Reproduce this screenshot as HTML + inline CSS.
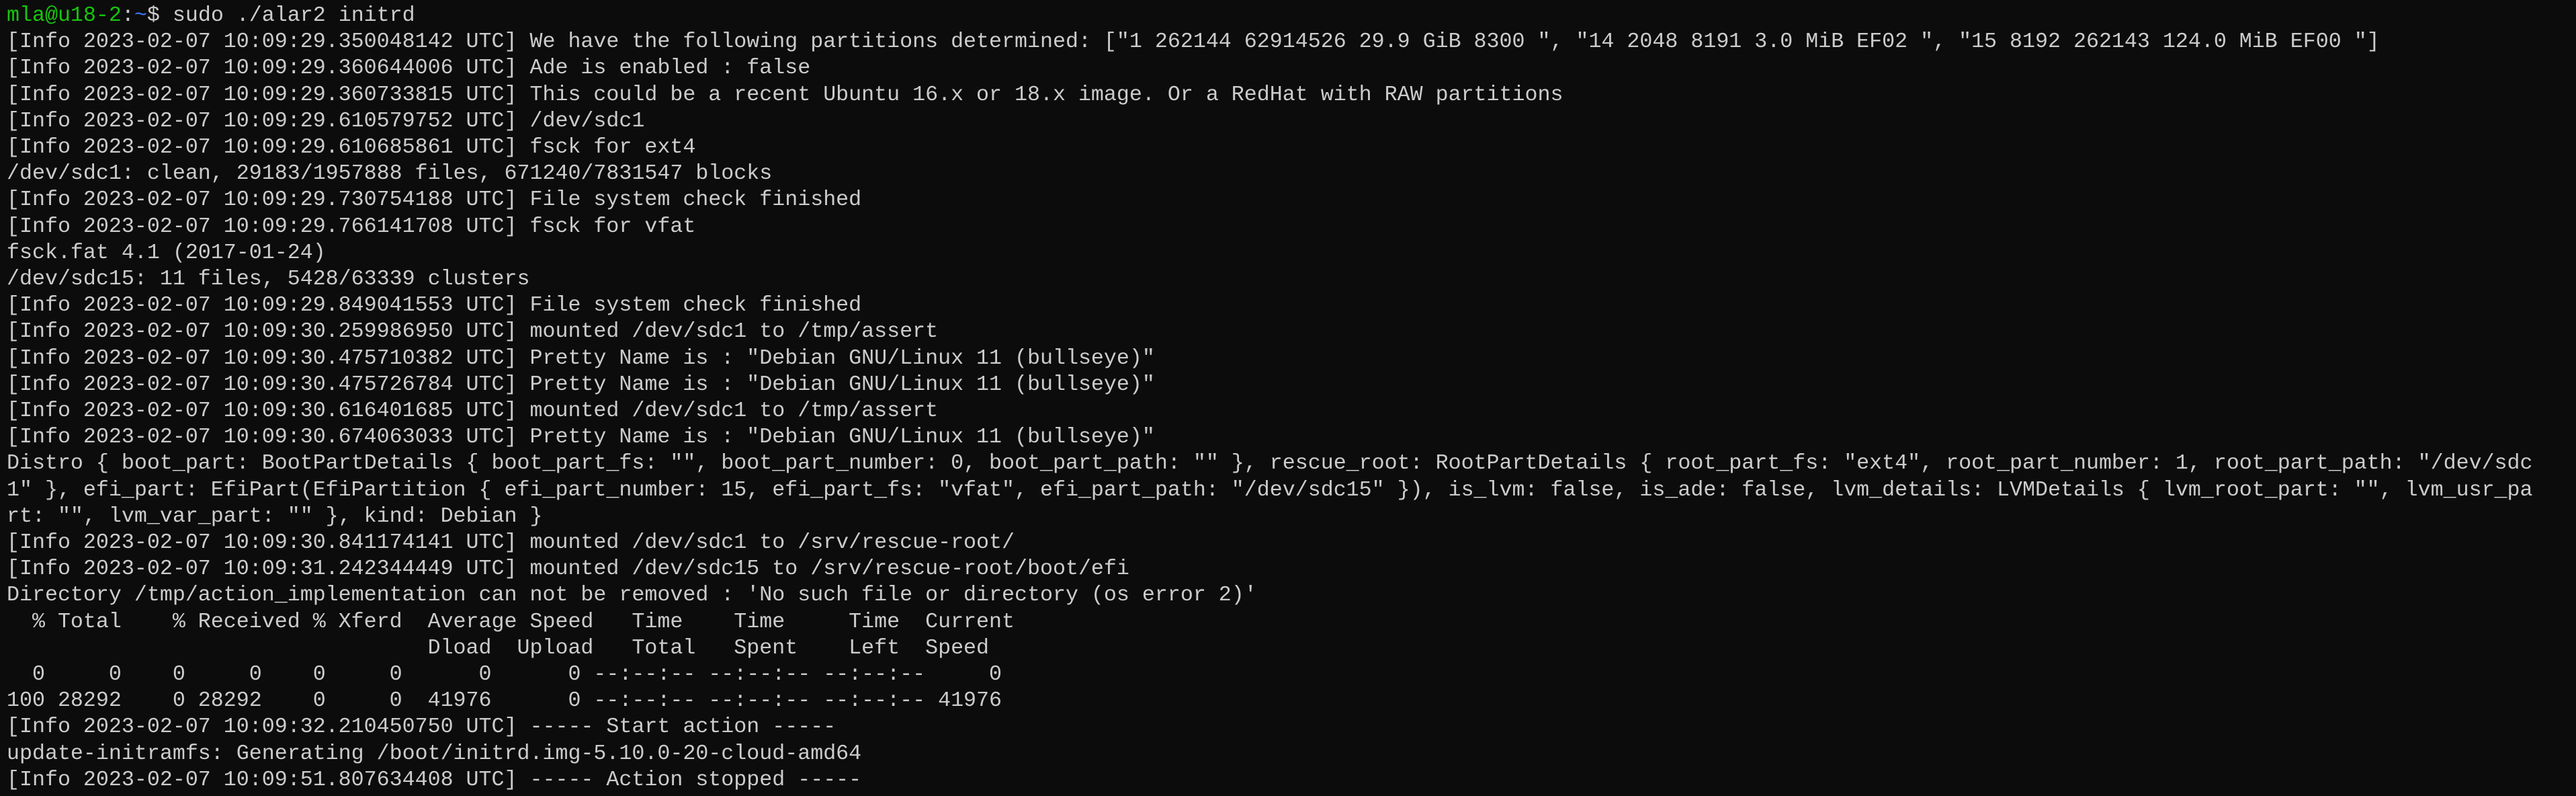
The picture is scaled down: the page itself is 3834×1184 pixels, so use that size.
<!DOCTYPE html>
<html><head><meta charset="utf-8"><style>
html,body{margin:0;padding:0;background:#0c0c0c;width:3834px;height:1184px;overflow:hidden}
pre{margin:0;padding:4px 0 0 10px;font-family:"Liberation Mono","DejaVu Sans Mono",monospace;font-size:31.65px;line-height:39.2px;color:#cccccc;white-space:pre}
.g{color:#16c60c}.b{color:#3b78ff}
</style></head><body><pre><span class="g">mla@u18-2</span>:<span class="b">~</span>$ sudo ./alar2 initrd
[Info 2023-02-07 10:09:29.350048142 UTC] We have the following partitions determined: ["1 262144 62914526 29.9 GiB 8300 ", "14 2048 8191 3.0 MiB EF02 ", "15 8192 262143 124.0 MiB EF00 "]
[Info 2023-02-07 10:09:29.360644006 UTC] Ade is enabled : false
[Info 2023-02-07 10:09:29.360733815 UTC] This could be a recent Ubuntu 16.x or 18.x image. Or a RedHat with RAW partitions
[Info 2023-02-07 10:09:29.610579752 UTC] /dev/sdc1
[Info 2023-02-07 10:09:29.610685861 UTC] fsck for ext4
/dev/sdc1: clean, 29183/1957888 files, 671240/7831547 blocks
[Info 2023-02-07 10:09:29.730754188 UTC] File system check finished
[Info 2023-02-07 10:09:29.766141708 UTC] fsck for vfat
fsck.fat 4.1 (2017-01-24)
/dev/sdc15: 11 files, 5428/63339 clusters
[Info 2023-02-07 10:09:29.849041553 UTC] File system check finished
[Info 2023-02-07 10:09:30.259986950 UTC] mounted /dev/sdc1 to /tmp/assert
[Info 2023-02-07 10:09:30.475710382 UTC] Pretty Name is : "Debian GNU/Linux 11 (bullseye)"
[Info 2023-02-07 10:09:30.475726784 UTC] Pretty Name is : "Debian GNU/Linux 11 (bullseye)"
[Info 2023-02-07 10:09:30.616401685 UTC] mounted /dev/sdc1 to /tmp/assert
[Info 2023-02-07 10:09:30.674063033 UTC] Pretty Name is : "Debian GNU/Linux 11 (bullseye)"
Distro { boot_part: BootPartDetails { boot_part_fs: "", boot_part_number: 0, boot_part_path: "" }, rescue_root: RootPartDetails { root_part_fs: "ext4", root_part_number: 1, root_part_path: "/dev/sdc
1" }, efi_part: EfiPart(EfiPartition { efi_part_number: 15, efi_part_fs: "vfat", efi_part_path: "/dev/sdc15" }), is_lvm: false, is_ade: false, lvm_details: LVMDetails { lvm_root_part: "", lvm_usr_pa
rt: "", lvm_var_part: "" }, kind: Debian }
[Info 2023-02-07 10:09:30.841174141 UTC] mounted /dev/sdc1 to /srv/rescue-root/
[Info 2023-02-07 10:09:31.242344449 UTC] mounted /dev/sdc15 to /srv/rescue-root/boot/efi
Directory /tmp/action_implementation can not be removed : 'No such file or directory (os error 2)'
  % Total    % Received % Xferd  Average Speed   Time    Time     Time  Current
                                 Dload  Upload   Total   Spent    Left  Speed
  0     0    0     0    0     0      0      0 --:--:-- --:--:-- --:--:--     0
100 28292    0 28292    0     0  41976      0 --:--:-- --:--:-- --:--:-- 41976
[Info 2023-02-07 10:09:32.210450750 UTC] ----- Start action -----
update-initramfs: Generating /boot/initrd.img-5.10.0-20-cloud-amd64
[Info 2023-02-07 10:09:51.807634408 UTC] ----- Action stopped -----
<span class="g">mla@u18-2</span>:<span class="b">~</span>$</pre></body></html>
